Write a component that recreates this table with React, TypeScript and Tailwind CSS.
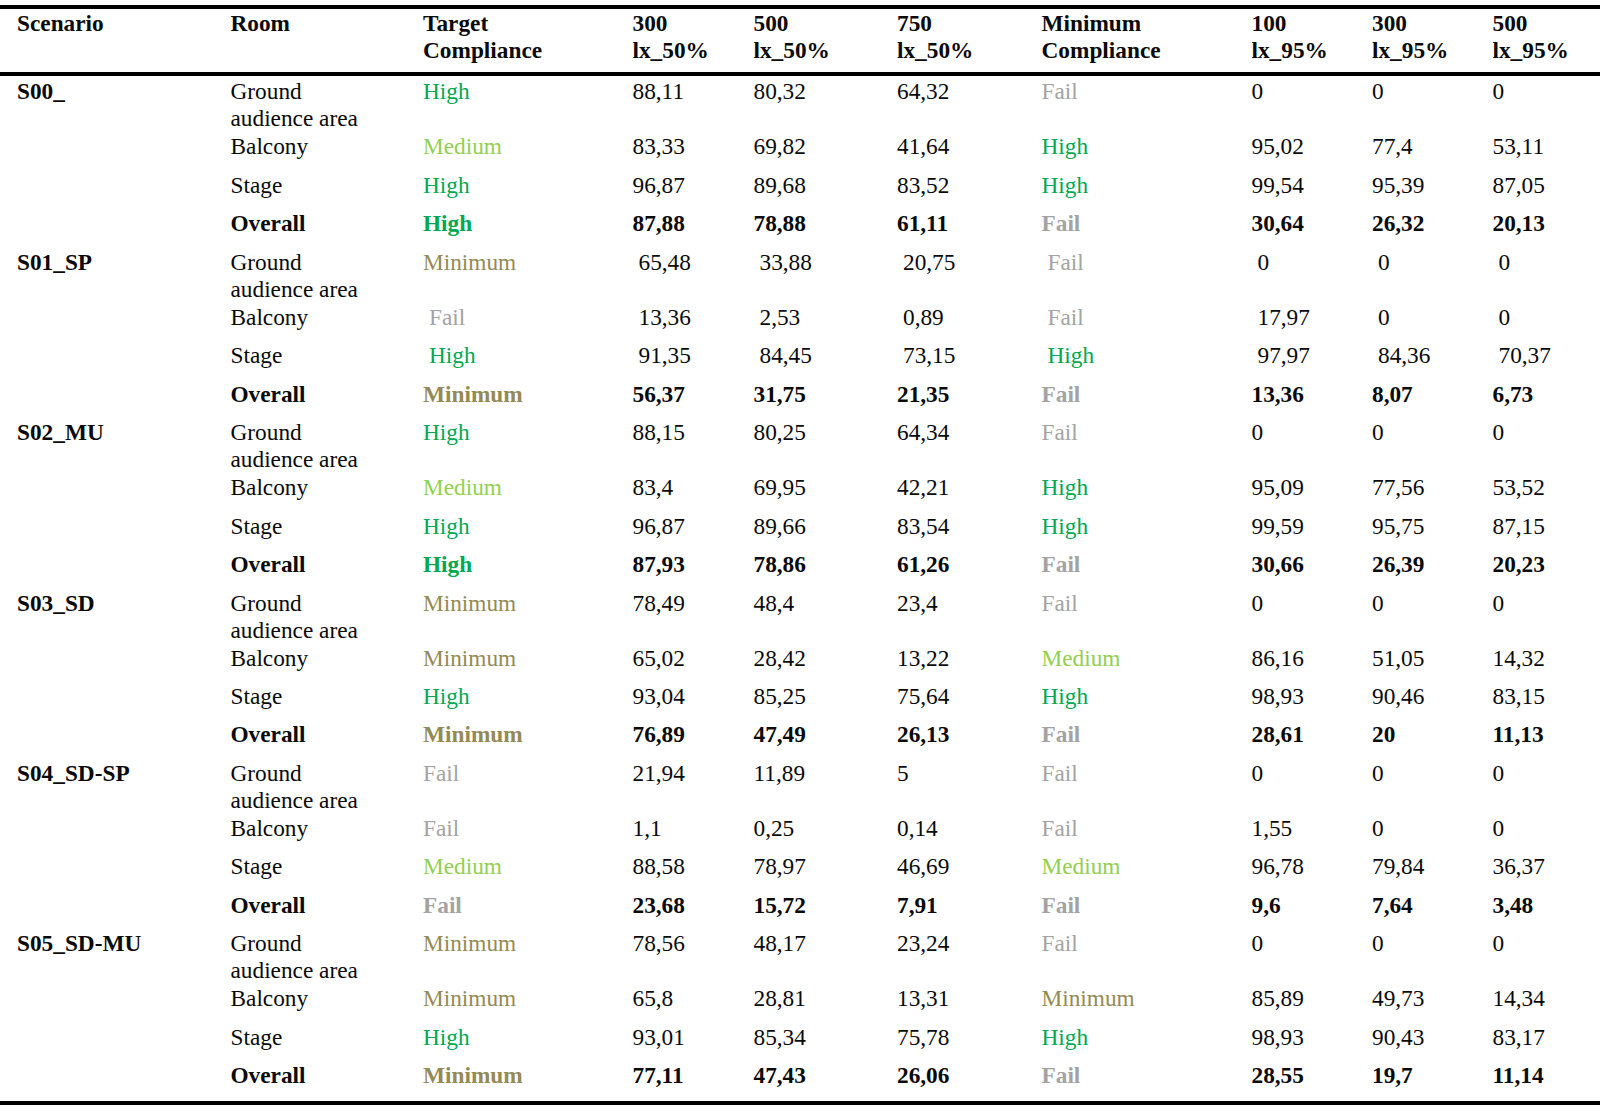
type Level = "High" | "Medium" | "Minimum" | "Fail";

type Row = {
  room: string;
  target: Level;
  lux50: string[];
  minimum: Level;
  lux95: string[];
  shift?: boolean;
  shiftTarget?: boolean;
};

type Scenario = { name: string; rows: Row[] };

const levelColor: Record<Level, string> = {
  High: "text-[#00a84f]",
  Medium: "text-[#92d050]",
  Minimum: "text-[#948a54]",
  Fail: "text-[#a3a3a3]",
};

const scenarios: Scenario[] = [
  {
    name: "S00_",
    rows: [
      { room: "Ground", target: "High", lux50: ["88,11", "80,32", "64,32"], minimum: "Fail", lux95: ["0", "0", "0"] },
      { room: "Balcony", target: "Medium", lux50: ["83,33", "69,82", "41,64"], minimum: "High", lux95: ["95,02", "77,4", "53,11"] },
      { room: "Stage", target: "High", lux50: ["96,87", "89,68", "83,52"], minimum: "High", lux95: ["99,54", "95,39", "87,05"] },
      { room: "Overall", target: "High", lux50: ["87,88", "78,88", "61,11"], minimum: "Fail", lux95: ["30,64", "26,32", "20,13"] },
    ],
  },
  {
    name: "S01_SP",
    rows: [
      { room: "Ground", target: "Minimum", lux50: ["65,48", "33,88", "20,75"], minimum: "Fail", lux95: ["0", "0", "0"], shift: true },
      { room: "Balcony", target: "Fail", lux50: ["13,36", "2,53", "0,89"], minimum: "Fail", lux95: ["17,97", "0", "0"], shift: true, shiftTarget: true },
      { room: "Stage", target: "High", lux50: ["91,35", "84,45", "73,15"], minimum: "High", lux95: ["97,97", "84,36", "70,37"], shift: true, shiftTarget: true },
      { room: "Overall", target: "Minimum", lux50: ["56,37", "31,75", "21,35"], minimum: "Fail", lux95: ["13,36", "8,07", "6,73"] },
    ],
  },
  {
    name: "S02_MU",
    rows: [
      { room: "Ground", target: "High", lux50: ["88,15", "80,25", "64,34"], minimum: "Fail", lux95: ["0", "0", "0"] },
      { room: "Balcony", target: "Medium", lux50: ["83,4", "69,95", "42,21"], minimum: "High", lux95: ["95,09", "77,56", "53,52"] },
      { room: "Stage", target: "High", lux50: ["96,87", "89,66", "83,54"], minimum: "High", lux95: ["99,59", "95,75", "87,15"] },
      { room: "Overall", target: "High", lux50: ["87,93", "78,86", "61,26"], minimum: "Fail", lux95: ["30,66", "26,39", "20,23"] },
    ],
  },
  {
    name: "S03_SD",
    rows: [
      { room: "Ground", target: "Minimum", lux50: ["78,49", "48,4", "23,4"], minimum: "Fail", lux95: ["0", "0", "0"] },
      { room: "Balcony", target: "Minimum", lux50: ["65,02", "28,42", "13,22"], minimum: "Medium", lux95: ["86,16", "51,05", "14,32"] },
      { room: "Stage", target: "High", lux50: ["93,04", "85,25", "75,64"], minimum: "High", lux95: ["98,93", "90,46", "83,15"] },
      { room: "Overall", target: "Minimum", lux50: ["76,89", "47,49", "26,13"], minimum: "Fail", lux95: ["28,61", "20", "11,13"] },
    ],
  },
  {
    name: "S04_SD-SP",
    rows: [
      { room: "Ground", target: "Fail", lux50: ["21,94", "11,89", "5"], minimum: "Fail", lux95: ["0", "0", "0"] },
      { room: "Balcony", target: "Fail", lux50: ["1,1", "0,25", "0,14"], minimum: "Fail", lux95: ["1,55", "0", "0"] },
      { room: "Stage", target: "Medium", lux50: ["88,58", "78,97", "46,69"], minimum: "Medium", lux95: ["96,78", "79,84", "36,37"] },
      { room: "Overall", target: "Fail", lux50: ["23,68", "15,72", "7,91"], minimum: "Fail", lux95: ["9,6", "7,64", "3,48"] },
    ],
  },
  {
    name: "S05_SD-MU",
    rows: [
      { room: "Ground", target: "Minimum", lux50: ["78,56", "48,17", "23,24"], minimum: "Fail", lux95: ["0", "0", "0"] },
      { room: "Balcony", target: "Minimum", lux50: ["65,8", "28,81", "13,31"], minimum: "Minimum", lux95: ["85,89", "49,73", "14,34"] },
      { room: "Stage", target: "High", lux50: ["93,01", "85,34", "75,78"], minimum: "High", lux95: ["98,93", "90,43", "83,17"] },
      { room: "Overall", target: "Minimum", lux50: ["77,11", "47,43", "26,06"], minimum: "Fail", lux95: ["28,55", "19,7", "11,14"] },
    ],
  },
];

const cols =
  "grid grid-cols-[213.5px_192.5px_209.5px_121px_143.5px_144.5px_210px_120.5px_120.5px_1fr] pl-[17px]";

const rowHeights = ["h-[55px]", "h-[38.4px]", "h-[38.4px]", "h-[38.6px]"];

const headers = [
  ["Scenario"],
  ["Room"],
  ["Target", "Compliance"],
  ["300", "lx_50%"],
  ["500", "lx_50%"],
  ["750", "lx_50%"],
  ["Minimum", "Compliance"],
  ["100", "lx_95%"],
  ["300", "lx_95%"],
  ["500", "lx_95%"],
];

function DataRow({ scenario, row, index }: { scenario: string; row: Row; index: number }) {
  const overall = row.room === "Overall";
  const weight = overall ? "font-bold" : "";
  const pad = row.shift ? "pl-[6px]" : "";
  return (
    <div className={`${cols} ${rowHeights[index]} ${weight}`}>
      <div className="font-bold">{index === 0 ? scenario : ""}</div>
      <div>
        {row.room === "Ground" ? (
          <>
            Ground
            <br />
            audience area
          </>
        ) : (
          row.room
        )}
      </div>
      <div className={`${levelColor[row.target]} ${row.shiftTarget ? "pl-[6px]" : ""}`}>{row.target}</div>
      {row.lux50.map((v, i) => (
        <div key={i} className={pad}>
          {v}
        </div>
      ))}
      <div className={`${levelColor[row.minimum]} ${pad}`}>{row.minimum}</div>
      {row.lux95.map((v, i) => (
        <div key={i} className={pad}>
          {v}
        </div>
      ))}
    </div>
  );
}

export default function App() {
  return (
    <div className="w-[1600px] h-[1116px] bg-white pt-[5px] text-[#0a0a0a] text-[23.3px] leading-[27px] [font-family:'Liberation_Serif','Times_New_Roman',serif]">
      <div className="border-t-4 border-b-4 border-black pt-[1.3px] pb-[7.7px]">
        <div className={`${cols} font-bold`}>
          {headers.map((h, i) => (
            <div key={i}>
              {h.map((line, j) => (
                <div key={j}>{line}</div>
              ))}
            </div>
          ))}
        </div>
      </div>
      <div className="border-b-4 border-black pt-[2.5px]">
        {scenarios.map((s) => (
          <div key={s.name}>
            {s.rows.map((r, i) => (
              <DataRow key={i} scenario={s.name} row={r} index={i} />
            ))}
          </div>
        ))}
      </div>
    </div>
  );
}
